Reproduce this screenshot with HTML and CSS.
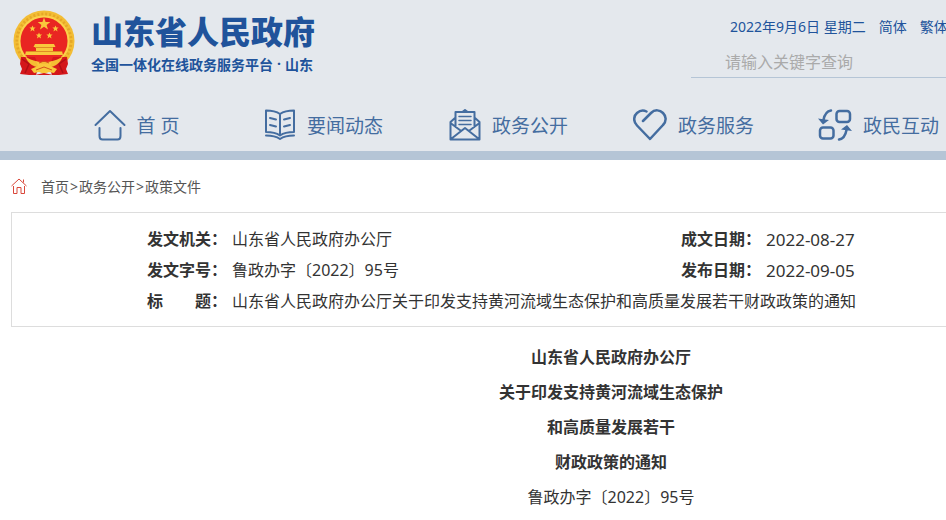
FILE: index.html
```html
<!DOCTYPE html>
<html lang="zh-CN">
<head>
    <meta charset="UTF-8">
    <meta name="viewport" content="width=device-width, initial-scale=1.0">
    <title>山东省人民政府</title>
    <link rel="stylesheet" href="styles.css">
</head>
<body>
    <header class="header">
        <div class="container">
            <div class="header-top">
                <a class="logo" href="#">
                    <svg class="emblem" viewBox="0 0 62 66" aria-hidden="true">
                        <circle cx="31" cy="31" r="30.5" fill="#f3bd35"/>
                        <circle cx="31" cy="31" r="27" fill="none" stroke="#e6a826" stroke-width="3" stroke-dasharray="2 2"/>
                        <circle cx="31" cy="31" r="24.5" fill="none" stroke="#fbd14b" stroke-width="2"/>
                        <circle cx="31" cy="31" r="23.5" fill="#e92522"/>
                        <g fill="#f9c83c">
                            <path d="M31 7.5l1.600 4.500h4.700l-3.700 2.900 1.400 4.500-4-2.700-4 2.700 1.400-4.500-3.700-2.900h4.700z"/>
                            <path d="M19.500 15.500l.9 2.100h2.200l-1.700 1.500.6 2.300-2-1.300-2 1.300.6-2.300-1.700-1.500h2.200z"/>
                            <path d="M42.500 15.500l.9 2.100h2.200l-1.700 1.500.6 2.300-2-1.300-2 1.300.6-2.300-1.700-1.500h2.200z"/>
                            <path d="M26 22.500l.9 2.100h2.200l-1.700 1.500.6 2.300-2-1.300-2 1.300.6-2.300-1.700-1.500h2.200z"/>
                            <path d="M36.500 22.500l.9 2.100h2.200l-1.700 1.500.6 2.300-2-1.300-2 1.300.6-2.300-1.700-1.500h2.200z"/>
                            <path d="M22 34h19l1.500 3h-22zM23 38h17v3h9l1 4H12l1-4h10z"/>
                        </g>
                        <path d="M22 37.500h18M13 41.500h36" stroke="#e08a24" stroke-width="1"/>
                        <path d="M8 47h14l4 9-3 9-7 0-9-1 2-5-2-5zM54 47H40l-4 9 3 9 7 0 9-1-2-5 2-5z" fill="#d4171b"/>
                        <path d="M9 49l7 5-4 9M53 49l-7 5 4 9" fill="none" stroke="#b00f15" stroke-width="1.5"/>
                        <path d="M12 46c5 4 12 6 19 6s14-2 19-6c-3 8-9 12-19 12s-16-4-19-12z" fill="#f5bd33"/>
                        <path d="M23 51l5 3h6l5-3-2 5 7 3-3 4-5-1-5 2-5-2-5 1-3-4 7-3z" fill="#f9c83c"/>
                        <path d="M26 53l5-2 5 2M23 60l8-3 8 3" fill="none" stroke="#d5531d" stroke-width="1"/>
                        <path d="M22 65h18l-9-2z" fill="#d4171b"/>
                    </svg>
                    <span class="logo-text">
                        <strong class="logo-title">山东省人民政府</strong>
                        <span class="logo-subtitle">全国一体化在线政务服务平台<span class="dot">·</span>山东</span>
                    </span>
                </a>
                <div class="header-tools">
                    <div class="top-links">
                        <span>2022年9月6日 星期二</span>
                        <a href="#">简体</a>
                        <a href="#">繁体</a>
                    </div>
                    <form class="search">
                        <input type="text" name="keyword" placeholder="请输入关键字查询" aria-label="请输入关键字查询">
                    </form>
                </div>
            </div>
            <nav class="nav">
                <a href="#">
                    <svg viewBox="0 0 32 32" aria-hidden="true"><path d="M1.500 16L16 2l14.500 14M5.500 19v8q0 3.500 3 3.500h15q3 0 3-3.500v-8"/></svg>
                    <span>首 页</span>
                </a>
                <a href="#">
                    <svg viewBox="0 0 32 32" aria-hidden="true"><path d="M16 5Q11 1.500 2 1.500V23q9 0 14 3.500 5-3.500 14-3.500V1.500Q21 1.500 16 5zM16 5v21M6 9l6 1.500M6 16l6 1.500M26 9l-6 1.500M26 16l-6 1.500M2 26.500q9 0 14 3.500 5-3.500 14-3.500"/></svg>
                    <span>要闻动态</span>
                </a>
                <a href="#">
                    <svg viewBox="0 0 32 32" aria-hidden="true"><path d="M6.500 18V3h19v15M6 9l-4.500 4v17.500h29V13L26 9M1.500 14l10 7.500M30.500 14l-10 7.500M2 30l14-11 14 11M14 2.500l2-1.500 2 1.500"/><path d="M10 7.500h12M10 11.500h12M10 15.500h12" stroke-width="1.5"/></svg>
                    <span>政务公开</span>
                </a>
                <a href="#">
                    <svg class="heart" viewBox="0 0 34 32" aria-hidden="true"><path d="M10 12l8-8c4-4 9-3 12 0s4 8 0 12L17 30 4 16.500C0 12.500.5 7 4 4q4.500-4 9.500-1.500"/></svg>
                    <span>政务服务</span>
                </a>
                <a href="#">
                    <svg class="swap" viewBox="0 0 34 32" aria-hidden="true"><rect x="18.500" y="2" width="13.500" height="11" rx="3"/><rect x="2" y="18.500" width="13.500" height="11" rx="3"/><path d="M13 1.500Q7 2.500 5.500 11M21 30.500Q27 29.500 28.500 21"/><path class="head" d="M0 9.500l11 1.500-6 4.500zM34 22l-11-1.500 6-4.500z"/></svg>
                    <span>政民互动</span>
                </a>
            </nav>
        </div>
    </header>

    <main class="container">
        <div class="breadcrumb">
            <svg viewBox="0 0 16 16" aria-hidden="true"><path d="M.5 8L8 1l7.500 7M12.500 4.500v-3M2.500 8v7.500h3.500V9.500h4v6h3.500V8"/></svg>
            <div><a href="#">首页</a><span>&gt;</span><a href="#">政务公开</a><span>&gt;</span><a href="#">政策文件</a></div>
        </div>

        <div class="info-box">
            <table class="info">
                <tr>
                    <th scope="row">发文机关：</th>
                    <td class="wide">山东省人民政府办公厅</td>
                    <th scope="row">成文日期：</th>
                    <td class="date">2022-08-27</td>
                </tr>
                <tr>
                    <th scope="row">发文字号：</th>
                    <td>鲁政办字〔2022〕95号</td>
                    <th scope="row">发布日期：</th>
                    <td class="date">2022-09-05</td>
                </tr>
                <tr>
                    <th scope="row">标　　题：</th>
                    <td colspan="3">山东省人民政府办公厅关于印发支持黄河流域生态保护和高质量发展若干财政政策的通知</td>
                </tr>
            </table>
        </div>

        <article class="article">
            <h1>山东省人民政府办公厅<br>关于印发支持黄河流域生态保护<br>和高质量发展若干<br>财政政策的通知</h1>
            <p>鲁政办字〔2022〕95号</p>
        </article>
    </main>
</body>
</html>
```
FILE: styles.css
```css
* {
    box-sizing: border-box;
}
html {
    overflow: hidden;
}
body {
    margin: 0;
    min-width: 1222px;
    background-color: #fff;
    color: #333;
    font-family: "Noto Sans", "Noto Sans CJK SC", sans-serif;
    font-size: 16px;
}
a {
    color: inherit;
    text-decoration: none;
}
.container {
    margin: 0 11px;
}

/* header */
.header {
    background-color: #e4e8ed;
    border-bottom: 9px solid #b5c5d6;
    color: #20539b;
}
.header-top {
    display: flex;
    justify-content: space-between;
    height: 98px;
}
.logo {
    display: flex;
    padding: 10px 0 0 2px;
}
.emblem {
    width: 62px;
    height: 66px;
    margin-right: 16px;
}
.logo-text {
    display: flex;
    flex-direction: column;
    font-family: "Noto Sans CJK SC", sans-serif;
    white-space: nowrap;
}
.logo-title {
    font-size: 32px;
    font-weight: 900;
    line-height: 40px;
}
.logo-subtitle {
    display: flex;
    font-size: 14px;
    font-weight: bold;
    line-height: 28px;
}
.dot {
    width: 12px;
    font-family: "Noto Sans", sans-serif;
    text-align: center;
}
.header-tools {
    width: 520px;
}
.top-links {
    display: flex;
    gap: 13px;
    padding: 17px 0 0 39px;
    font-size: 14px;
    line-height: 20px;
}
.search {
    margin-top: 10px;
}
.search input {
    width: 100%;
    height: 31px;
    padding: 0 34px;
    border: none;
    border-bottom: 1px solid #b5c5d6;
    background: none;
    font-family: inherit;
    font-size: 16px;
    outline: none;
}
.search input::placeholder {
    color: #aaa;
}

/* navigation */
.nav {
    display: flex;
    height: 53px;
    padding-left: 35px;
}
.nav a {
    display: flex;
    justify-content: center;
    align-items: center;
    gap: 11px;
    width: 185px;
    color: #446da0;
    font-size: 19px;
    white-space: nowrap;
}
.nav a:first-child {
    padding-right: 4px;
}
.nav svg {
    width: 32px;
    height: 32px;
    fill: none;
    stroke: #446da0;
    stroke-width: 2;
    stroke-linecap: round;
    stroke-linejoin: round;
}
.nav .heart,
.nav .swap {
    width: 34px;
    stroke-width: 2.5;
}
.nav .swap .head {
    fill: #446da0;
    stroke: none;
}

/* breadcrumb */
.breadcrumb {
    display: flex;
    align-items: center;
    gap: 14px;
    height: 52px;
    color: #555;
    font-size: 14px;
}
.breadcrumb svg {
    width: 16px;
    height: 16px;
    fill: none;
    stroke: #d9483b;
    stroke-width: 1;
}
.breadcrumb span {
    padding: 0 1px;
}

/* document info */
.info-box {
    padding: 11px 135px 9px;
    border: 1px solid #ddd;
}
.info {
    border-collapse: collapse;
    line-height: 31px;
}
.info th,
.info td {
    padding: 0;
    text-align: left;
    white-space: nowrap;
}
.info th {
    width: 85px;
}
.info .wide {
    width: 449px;
}
.info .date {
    font-size: 17px;
}

/* article */
.article {
    padding-top: 13px;
    line-height: 35px;
    text-align: center;
}
.article h1,
.article p {
    margin: 0;
    font-size: 16px;
}
```
